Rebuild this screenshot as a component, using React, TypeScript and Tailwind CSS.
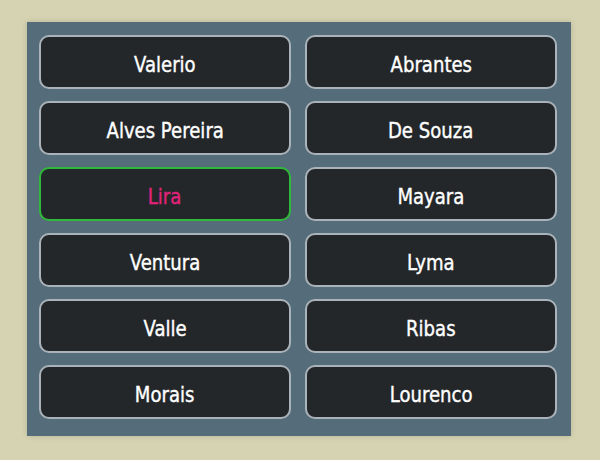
const names = [
  "Valerio",
  "Abrantes",
  "Alves Pereira",
  "De Souza",
  "Lira",
  "Mayara",
  "Ventura",
  "Lyma",
  "Valle",
  "Ribas",
  "Morais",
  "Lourenco",
];

export default function App() {
  return (
    <div className="w-[600px] h-[460px] bg-[#d5d3b1] pt-[22px] pl-[27px]">
      <div className="w-[544px] h-[414px] bg-[#556c7a] pl-3 pt-[13px] pr-[14px] pb-[17px] shadow-[0_0_6px_rgba(0,0,0,0.15)]">
        <div className="grid grid-cols-[252px_252px] gap-x-[14px] gap-y-3">
          {names.map((n) => {
            const active = n === "Lira";
            return (
              <button
                key={n}
                className={
                  active
                    ? "h-[54px] pt-[7px] rounded-[10px] border-2 border-[#2fb83a] bg-[#24272a] text-[#e0227a] [-webkit-text-stroke:0.4px_#e0227a]"
                    : "h-[54px] pt-[7px] rounded-[10px] border-2 border-[#aab3b9] bg-[#24272a] text-white [-webkit-text-stroke:0.4px_white]"
                }
              >
                <span className="inline-block scale-x-[0.86] text-[21px] [font-family:'DejaVu_Sans',sans-serif]">
                  {n}
                </span>
              </button>
            );
          })}
        </div>
      </div>
    </div>
  );
}
